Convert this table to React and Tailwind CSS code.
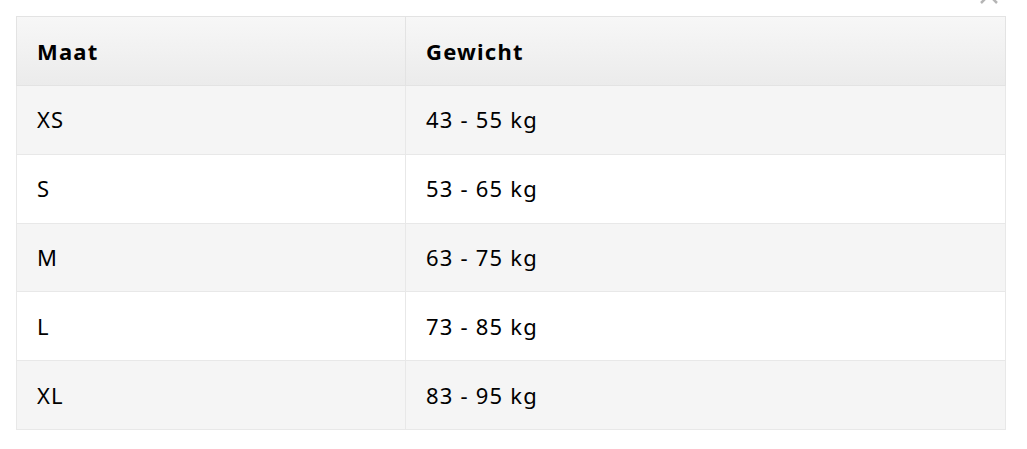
import React from "react";

const rows = [
  ["XS", "43 - 55 kg"],
  ["S", "53 - 65 kg"],
  ["M", "63 - 75 kg"],
  ["L", "73 - 85 kg"],
  ["XL", "83 - 95 kg"],
];

export default function App() {
  return (
    <div className="relative w-[1027px] h-[449px] bg-white overflow-hidden" style={{ fontFamily: '"Noto Sans", "Open Sans", sans-serif' }}>
      <svg className="absolute left-[979px] top-[-13px]" width="20" height="17" viewBox="0 0 20 17">
        <path d="M2 0 L18 16 M18 0 L2 16" stroke="#b5b5b5" strokeWidth="2.5" fill="none" />
      </svg>
      <div className="pt-4 px-4">
        <table className="w-[990px] border-collapse text-[22px] tracking-[1.2px] text-black">
          <thead>
            <tr className="bg-gradient-to-b from-[#f7f7f7] to-[#ebebeb]">
              <th className="w-[389px] h-[69px] border border-[#e3e3e3] pl-5 text-left font-bold">Maat</th>
              <th className="h-[69px] border border-[#e3e3e3] pl-5 text-left font-bold">Gewicht</th>
            </tr>
          </thead>
          <tbody>
            {rows.map(([m, g], i) => (
              <tr key={m} className={i % 2 === 0 ? "bg-[#f5f5f5]" : "bg-white"}>
                <td className="h-[68.8px] border border-[#e8e8e8] pl-5">{m}</td>
                <td className="h-[68.8px] border border-[#e8e8e8] pl-5">{g}</td>
              </tr>
            ))}
          </tbody>
        </table>
      </div>
    </div>
  );
}
